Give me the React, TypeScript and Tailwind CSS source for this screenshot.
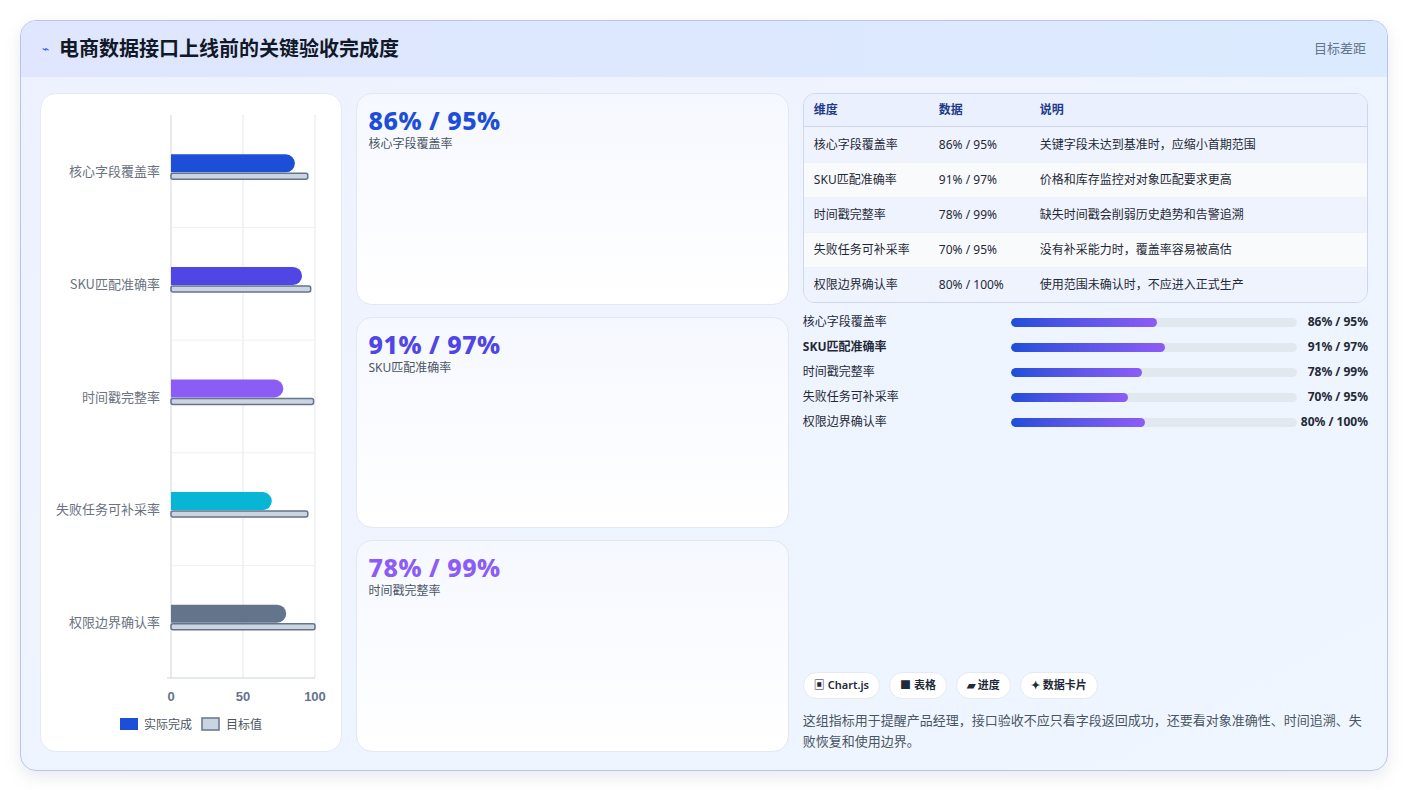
import React from "react";

const rows = [
  { name: "核心字段覆盖率", a: 86, t: 95, desc: "关键字段未达到基准时，应缩小首期范围", color: "#1d4ed8", d: "86% / 95%" },
  { name: "SKU匹配准确率", a: 91, t: 97, desc: "价格和库存监控对对象匹配要求更高", color: "#4f46e5", d: "91% / 97%" },
  { name: "时间戳完整率", a: 78, t: 99, desc: "缺失时间戳会削弱历史趋势和告警追溯", color: "#8b5cf6", d: "78% / 99%" },
  { name: "失败任务可补采率", a: 70, t: 95, desc: "没有补采能力时，覆盖率容易被高估", color: "#06b6d4", d: "70% / 95%" },
  { name: "权限边界确认率", a: 80, t: 100, desc: "使用范围未确认时，不应进入正式生产", color: "#64748b", d: "80% / 100%" },
];

function Chart() {
  const x0 = 130, w = 144, top = 21, rh = 112.6;
  return (
    <svg width="300" height="655" className="block">
      {[0, 50, 100].map((v) => (
        <line key={v} x1={x0 + (v / 100) * w} x2={x0 + (v / 100) * w} y1={top} y2={top + rh * 5} stroke={v === 0 ? "#d1d5db" : "#e5e7eb"} />
      ))}
      {[1, 2, 3, 4].map((i) => (
        <line key={i} x1={x0} x2={x0 + w} y1={top + rh * i} y2={top + rh * i} stroke="#eef0f3" />
      ))}
      <line x1={x0 - 4} x2={x0 + w} y1={top + rh * 5} y2={top + rh * 5} stroke="#cbd5e1" />
      {rows.map((r, i) => {
        const cy = top + rh * i + rh / 2;
        const aw = (r.a / 100) * w, tw = (r.t / 100) * w;
        return (
          <g key={i}>
            <text x={x0 - 11} y={cy + 5} textAnchor="end" fontSize="13" fill="#6b7280" fontFamily="'Noto Sans CJK SC', sans-serif">{r.name}</text>
            <path d={`M${x0} ${cy - 17} H${x0 + aw - 9} a9 9 0 0 1 0 18 H${x0} Z`} fill={r.color} />
            <rect x={x0} y={cy + 2} width={tw} height={6} rx={2} fill="#cbd5e1" stroke="#64748b" strokeWidth="1.5" />
          </g>
        );
      })}
      {[0, 50, 100].map((v) => (
        <text key={v} x={x0 + (v / 100) * w} y={top + rh * 5 + 23} textAnchor="middle" fontSize="13" fill="#64748b" fontWeight="600" fontFamily="'Liberation Sans', sans-serif">{v}</text>
      ))}
      <rect x={79} y={top + rh * 5 + 40} width={18} height={12} fill="#1d4ed8" />
      <text x={103} y={top + rh * 5 + 51} fontSize="12" fill="#4b5563" fontFamily="'Noto Sans CJK SC', sans-serif">实际完成</text>
      <rect x={161} y={top + rh * 5 + 40} width={17} height={12} fill="#cbd5e1" stroke="#64748b" strokeWidth="1.5" />
      <text x={185} y={top + rh * 5 + 51} fontSize="12" fill="#4b5563" fontFamily="'Noto Sans CJK SC', sans-serif">目标值</text>
    </svg>
  );
}

export default function App() {
  const font = { fontFamily: "'Noto Sans', 'Noto Sans CJK SC', sans-serif" };
  return (
    <div className="w-[1408px] h-[790px] bg-white p-5 pb-[18px]" style={font}>
      <div className="h-[751px] rounded-2xl border border-[#b9c3ee] bg-gradient-to-br from-[#eef2fe] to-[#eff6ff] overflow-hidden flex flex-col shadow-[0_6px_16px_rgba(100,116,139,0.15)]">
        <div className="h-[56px] shrink-0 flex items-center justify-between px-[21px] bg-gradient-to-r from-[#dfe6fd] to-[#dbeafe]">
          <div className="flex items-center gap-[10px]">
            <span className="text-[#3b5bdb] text-[12px]">⌁</span>
            <span className="text-[20px] font-bold text-[#111827]">电商数据接口上线前的关键验收完成度</span>
          </div>
          <span className="text-[13px] text-[#64748b]">目标差距</span>
        </div>
        <div className="flex-1 flex gap-[14px] px-[19px] pt-[16px] pb-[18px]">
          <div className="w-[302px] bg-white rounded-2xl border border-[#e5e9f2] overflow-hidden">
            <Chart />
          </div>
          <div className="w-[434px] flex flex-col gap-[12px]">
            {rows.slice(0, 3).map((r, i) => (
              <div key={i} className="flex-1 rounded-2xl border border-[#e2e8f0] bg-gradient-to-b from-[#f5f8ff] to-white px-[12px] pt-[9px]">
                <div className="text-[25px] font-extrabold leading-[34px] tracking-[0.5px]" style={{ color: r.color }}>{r.d}</div>
                <div className="text-[12px] text-[#4b5563] mt-[-2px]">{r.name}</div>
              </div>
            ))}
          </div>
          <div className="w-[566px] flex flex-col">
            <div className="rounded-xl border border-[#cfd8ea] overflow-hidden text-[12px] text-[#1f2937]">
              <div className="flex h-[33px] items-center bg-[#eaf0fd] border-b border-[#cfd8ea] text-[#1e3a8a] font-semibold">
                <div className="w-[135px] pl-[10px]">维度</div><div className="w-[101px]">数据</div><div>说明</div>
              </div>
              {rows.map((r, i) => (
                <div key={i} className={`flex h-[35px] items-center border-t border-[#eef1f6] ${i % 2 === 0 ? "bg-[#eef3fd]" : "bg-[#f8fafc]"}`}>
                  <div className="w-[135px] pl-[10px]">{r.name}</div><div className="w-[101px]">{r.d}</div><div>{r.desc}</div>
                </div>
              ))}
            </div>
            <div className="flex flex-col gap-[7px] mt-[10px]">
              {rows.map((r, i) => (
                <div key={i} className="flex items-center h-[18px] text-[12px]">
                  <div className={`w-[208px] text-[#1f2937] ${i === 1 ? "font-bold" : ""}`}>{r.name}</div>
                  <div className="w-[286px] h-[9px] rounded-full bg-[#e2e8f0] overflow-hidden">
                    <div className="h-full rounded-full bg-gradient-to-r from-[#1d4ed8] to-[#8b5cf6]" style={{ width: `${[51, 54, 46, 41, 47][i]}%` }} />
                  </div>
                  <div className="flex-1 text-right font-bold text-[#1f2937]">{r.d}</div>
                </div>
              ))}
            </div>
            <div className="flex-1" />
            <div className="flex gap-[9px] text-[11px] font-semibold text-[#1f2937]">
              {["▣ Chart.js", "■ 表格", "▰ 进度", "✦ 数据卡片"].map((c) => (
                <span key={c} className="h-[27px] px-[10px] flex items-center rounded-full bg-white border border-[#e5e9f2]">{c}</span>
              ))}
            </div>
            <p className="mt-[11px] text-[13px] leading-[21px] text-[#4b5563]">这组指标用于提醒产品经理，接口验收不应只看字段返回成功，还要看对象准确性、时间追溯、失败恢复和使用边界。</p>
          </div>
        </div>
      </div>
    </div>
  );
}
